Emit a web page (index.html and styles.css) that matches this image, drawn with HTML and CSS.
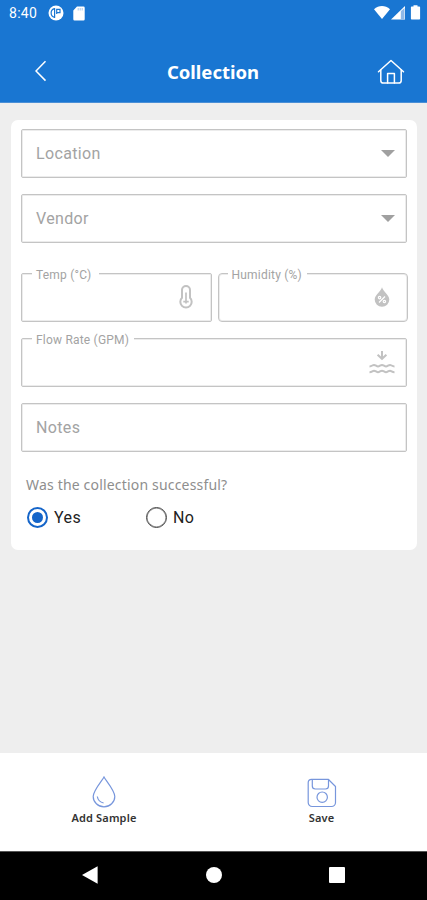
FILE: index.html
```html
<!DOCTYPE html>
<html lang="en">
<head>
<meta charset="utf-8">
<title>Collection</title>
<meta name="viewport" content="width=device-width">
<link rel="stylesheet" href="styles.css">
</head>
<body>
<div class="screen">
  <header class="top">
    <div class="status">
      <span class="clock">8:40</span>
      <svg class="st-app" width="16" height="16" viewBox="0 0 16 16"><circle cx="8" cy="8" r="7.500" fill="#fff"/><path d="M6.600 3.700a4.400 4.400 0 0 0 0 8.600zM8.700 9V4.400h3.300v3.200H8.700" fill="none" stroke="#1976d2" stroke-width="1.200"/></svg>
      <svg class="st-card" width="12" height="15" viewBox="0 0 12 15"><path d="M4 .5h6.500a1.200 1.200 0 0 1 1.200 1.200v11.600a1.200 1.200 0 0 1-1.200 1.200h-9A1.200 1.200 0 0 1 .3 13.300V4.500z" fill="#fff"/><path d="M5.200 2v2.500M7.200 2v2.500M9.200 2v2.500" stroke="#a9c9ec" stroke-width="1"/></svg>
      <svg class="st-sys" width="48" height="16" viewBox="0 0 48 16"><path d="M0 4.200C4.800-.1 11.200-.1 16 4.200L8 14z" fill="#fff"/><path d="M31 1v13.500H17z" fill="#fff"/><path d="M26.800 6.200 30.500 3v11.500h-3.700z" fill="#8fb9e8"/><path d="M39.500 1.500V.2h4v1.300h1.800a.8.8 0 0 1 .8.800v11.400a.8.8 0 0 1-.8.800h-7.600a.8.8 0 0 1-.8-.800V2.300a.8.8 0 0 1 .8-.800z" fill="#fff"/></svg>
    </div>
    <div class="bar">
      <svg width="12" height="22" viewBox="0 0 12 22"><path d="M10.500 1.200 1 11l9.500 9.600" fill="none" stroke="#fff" stroke-width="1.500"/></svg>
      <h1>Collection</h1>
      <svg class="home" width="28" height="26" viewBox="0 0 28 26"><g fill="none" stroke="#fff" stroke-width="1.500" stroke-linejoin="round" stroke-linecap="round"><path d="M1.500 12.700 14 1.500l12.500 11.200"/><path d="M3.800 11v10.400A2.600 2.600 0 0 0 6.400 24h15.200a2.600 2.600 0 0 0 2.600-2.600V11"/><path d="M10.600 24v-9.400h6.800V24"/></g></svg>
    </div>
  </header>

  <main>
    <section class="card">
      <div class="field"><span>Location</span><i class="caret"></i></div>
      <div class="field"><span>Vendor</span><i class="caret"></i></div>
      <div class="pair">
        <div class="field"><label class="temp">Temp (°C)</label>
          <svg class="icon i-temp" width="14" height="24" viewBox="0 0 14 24"><path d="M3 12.800V5a4 4 0 0 1 8 0v7.800a5.700 5.700 0 1 1-8 0z" fill="none" stroke="#c2c2c2" stroke-width="2"/><path d="M7 7.500v11M4.300 16.700h5.400" stroke="#c2c2c2" stroke-width="1.700"/></svg>
        </div>
        <div class="field round"><label class="hum">Humidity (%)</label>
          <svg class="icon i-hum" width="16" height="20" viewBox="0 0 16 20"><path d="M8 .3C9 4.200 15.300 8 15.300 12.500a7.300 7.300 0 0 1-14.600 0C.7 8 7 4.200 8 .3z" fill="#c2c2c2"/><g fill="none" stroke="#fff" stroke-width="1.200"><path d="m11 9.500-6 6"/><circle cx="5.600" cy="10.600" r="1.200"/><circle cx="10.400" cy="14.500" r="1.200"/></g></svg>
        </div>
      </div>
      <div class="field"><label class="flow">Flow Rate (GPM)</label>
        <svg class="icon i-flow" width="26" height="24" viewBox="0 0 26 24"><g fill="none" stroke="#c2c2c2" stroke-width="2"><path d="M13 0v7.700M8.600 3.700 13 7.800l4.400-4.100"/><path d="M.5 15.400c2.500 0 3-1.500 4.500-1.500s2.600 1.500 4 1.500 2.600-1.500 4-1.500 2.600 1.500 4 1.500 2.600-1.500 4-1.500 2 1.500 4.500 1.500M.5 21.200c2.500 0 3-1.500 4.500-1.500s2.600 1.500 4 1.500 2.600-1.500 4-1.500 2.600 1.500 4 1.500 2.600-1.500 4-1.500 2 1.500 4.500 1.500"/></g></svg>
      </div>
      <div class="field notes"><span>Notes</span></div>
      <p class="question">Was the collection successful?</p>
      <div class="radios">
        <div class="radio on"><b></b><span>Yes</span></div>
        <div class="radio"><b></b><span>No</span></div>
      </div>
    </section>
  </main>

  <footer class="actions">
    <div class="action add">
      <svg width="24" height="32" viewBox="0 0 24 32"><g fill="none" stroke="#7796dc" stroke-width="1.200"><path d="M12 1C13.500 4 22.800 14.500 22.800 20.500a10.800 10.300 0 0 1-21.600 0C1.200 14.500 10.500 4 12 1z"/><path d="M5.300 20.500c.6 3.500 3 5.800 6.300 6.500"/></g></svg>
      <span>Add Sample</span>
    </div>
    <div class="action save">
      <svg width="30" height="30" viewBox="0 0 30 30"><g fill="none" stroke="#7796dc" stroke-width="1.200" stroke-linejoin="round"><path d="M4.500 1.300h16.700l7.300 7.200v16a4 4 0 0 1-4 4H5.200a4 4 0 0 1-4-4v-20a3.300 3.300 0 0 1 3.300-3.200z"/><path d="M5.300 1.300V8a3 3 0 0 0 3 3h10.200a3 3 0 0 0 3-3V1.300"/><circle cx="15.200" cy="19.200" r="5.200"/></g></svg>
      <span>Save</span>
    </div>
  </footer>
  <nav class="nav">
    <svg width="16" height="18" viewBox="0 0 16 18"><path d="M15.600.3v17.400L0 9z" fill="#fff"/></svg>
    <i class="dot"></i>
    <i class="square"></i>
  </nav>
</div>
</body>
</html>
```
FILE: styles.css
```css
* { box-sizing: border-box; }
body { margin: 0; font-family: Roboto, sans-serif; }
.screen { width: 427px; height: 900px; display: flex; flex-direction: column; background: #eee; overflow: hidden; }
svg { display: block; flex: none; }

.top { height: 103px; background: #1976d2; color: #fff; border-bottom: 1px solid #4a8fd6; }
.status { height: 26px; display: flex; align-items: center; padding: 0 6px 0 9px; }
.clock { font-size: 14px; width: 39px; letter-spacing: .3px; }
.st-card { margin-left: 9px; }
.st-sys { margin-left: auto; margin-right: -1px; }
.bar { height: 76px; padding: 15px 22px 0 35px; display: flex; justify-content: space-between; align-items: center; }
.bar svg { margin-top: -1px; }
.bar .home { margin-top: 1px; }
.bar h1 { margin: 0 0 0 2px; font: 700 18.500px/24px "Noto Sans", sans-serif; }

main { flex: 1; padding: 17px 10px 0 11px; }
.card { height: 430px; background: #fff; border-radius: 7px; padding: 9px 10px 0; display: flex; flex-direction: column; }
.field { position: relative; height: 49px; margin-bottom: 16px; border: 1px solid #c4c4c4; box-shadow: inset 0 0 0 1px #ececec; border-radius: 2px; display: flex; align-items: center; justify-content: space-between; padding: 0 11px 0 14px; color: #a3a3a3; font-size: 16px; letter-spacing: .35px; }
.caret { border: 7px solid transparent; border-top: 7px solid #a0a0a0; border-bottom: 0; }
.pair { display: flex; gap: 6px; margin: 14px -1px 0 0; }
.pair .field { flex: 1; }
.field.round { border-radius: 4px; }
.field label { position: absolute; left: 10px; top: -6px; height: 15px; padding-left: 4px; background: #fff; font-size: 12px; line-height: 15px; white-space: nowrap; letter-spacing: .2px; }
.temp { width: 67px; }
.field .hum { width: 79px; left: 9px; }
.flow { width: 102px; }
.icon { margin-left: auto; }
.i-temp { margin-right: 7px; margin-bottom: 2px; }
.i-hum { margin-right: 6px; margin-bottom: 2px; }
.question { margin: 7px 0 0 5px; font: 14px/20px "Noto Sans", sans-serif; letter-spacing: .18px; color: #8e8e8e; }
.radios { display: flex; padding: 11px 0 0 6px; }
.radio { width: 119px; height: 22px; display: flex; align-items: center; gap: 6px; font-size: 16px; letter-spacing: .4px; color: #222; }
.radio b { width: 21px; height: 21px; border: 1px solid #444; box-shadow: inset 0 0 0 .5px #777; border-radius: 50%; display: flex; align-items: center; justify-content: center; }
.radio.on b { border: 2px solid #1565c9; box-shadow: none; }
.on b::after { content: ""; width: 11px; height: 11px; border-radius: 50%; background: #1565c9; }

.actions { height: 98px; background: #fff; display: flex; justify-content: space-between; }
.action { display: flex; flex-direction: column; align-items: center; font: 600 11px/14px "Noto Sans", sans-serif; letter-spacing: .15px; color: #333; }
.add { width: 208px; padding-top: 23px; }
.save { width: 211px; padding-top: 25px; }
.action span { margin-top: 3px; }
.nav { height: 49px; background: #000; border-top: 1px solid #555; display: flex; align-items: center; padding: 0 82px 2px; justify-content: space-between; }
.dot { width: 16px; height: 16px; border-radius: 50%; background: #fff; }
.square { width: 16px; height: 16px; background: #fff; border-radius: 1px; }
```
